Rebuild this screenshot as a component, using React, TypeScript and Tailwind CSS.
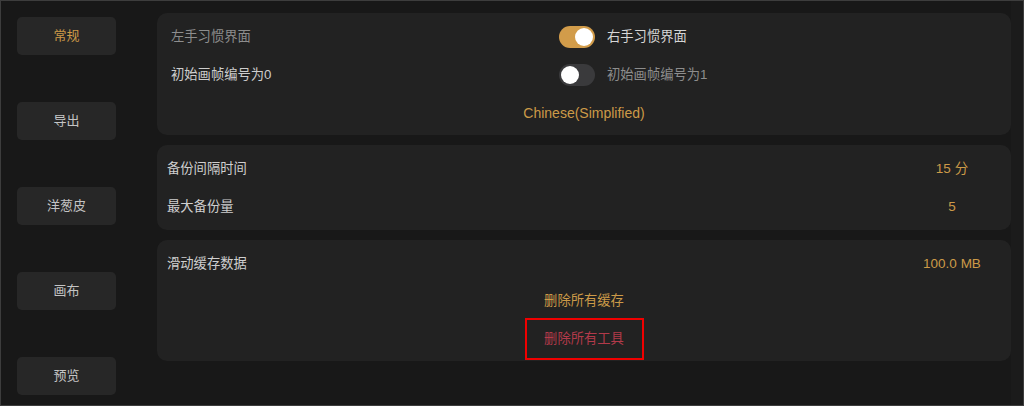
import React from "react";

const gold = "text-[#cc9a48]";

function Toggle({ on }: { on: boolean }) {
  return (
    <div
      className={`w-[36px] h-[22px] rounded-full p-[2px] flex ${
        on ? "bg-[#d29c4a] justify-end" : "bg-[#3a3a3c] justify-start"
      }`}
    >
      <div className="w-[18px] h-[18px] rounded-full bg-white" />
    </div>
  );
}

function SideBtn({ label, active }: { label: string; active?: boolean }) {
  return (
    <div
      className={`w-[99px] h-[38px] rounded-[5px] bg-[#272727] flex items-center justify-center text-[13px] ${
        active ? gold : "text-[#c4c4c4]"
      }`}
    >
      {label}
    </div>
  );
}

function ValueRow({ label, value }: { label: string; value: string }) {
  return (
    <div className="h-[38px] flex items-center pl-[10px] pr-[13px]">
      <div className="flex-1 text-[#cfcfcf]">{label}</div>
      <div className={`w-[92px] text-center text-[13.5px] ${gold}`}>{value}</div>
    </div>
  );
}

export default function App() {
  return (
    <div
      className="w-[1024px] h-[406px] border border-[#3d3d3d] bg-[#181818] flex text-[13.3px]"
      style={{ fontFamily: '"Liberation Sans", "Noto Sans CJK SC", sans-serif' }}
    >
      <div className="w-[156px] pl-[16px] pt-[16px] flex flex-col gap-[47px]">
        <SideBtn label="常规" active />
        <SideBtn label="导出" />
        <SideBtn label="洋葱皮" />
        <SideBtn label="画布" />
        <SideBtn label="预览" />
      </div>
      <div className="flex-1 pt-[12px] flex flex-col gap-[10px]">
        <div className="h-[122px] rounded-[10px] bg-[#222222] pt-[5px]">
          <div className="h-[38px] flex items-center pl-[14px]">
            <div className="w-[388px] text-[#8d8d8d]">左手习惯界面</div>
            <Toggle on />
            <div className="ml-[12px] text-[#d6d6d6]">右手习惯界面</div>
          </div>
          <div className="h-[38px] flex items-center pl-[14px]">
            <div className="w-[388px] text-[#cdcdcd]">初始画帧编号为0</div>
            <Toggle on={false} />
            <div className="ml-[12px] text-[#8d8d8d]">初始画帧编号为1</div>
          </div>
          <div className={`h-[38px] flex items-center justify-center text-[14px] ${gold}`}>
            Chinese(Simplified)
          </div>
        </div>
        <div className="h-[85px] rounded-[10px] bg-[#222222] pt-[5px]">
          <ValueRow label="备份间隔时间" value="15 分" />
          <ValueRow label="最大备份量" value="5" />
        </div>
        <div className="h-[121px] rounded-[10px] bg-[#222222] pt-[5px]">
          <ValueRow label="滑动缓存数据" value="100.0 MB" />
          <div className={`h-[35px] flex items-center justify-center ${gold}`}>
            删除所有缓存
          </div>
          <div className="flex justify-center">
            <div className="w-[119px] h-[42px] border-2 border-[#f00000] flex items-center justify-center text-[#b23a4a]">
              删除所有工具
            </div>
          </div>
        </div>
      </div>
      <div className="w-[12px] bg-[#1b1b1b]" />
    </div>
  );
}
